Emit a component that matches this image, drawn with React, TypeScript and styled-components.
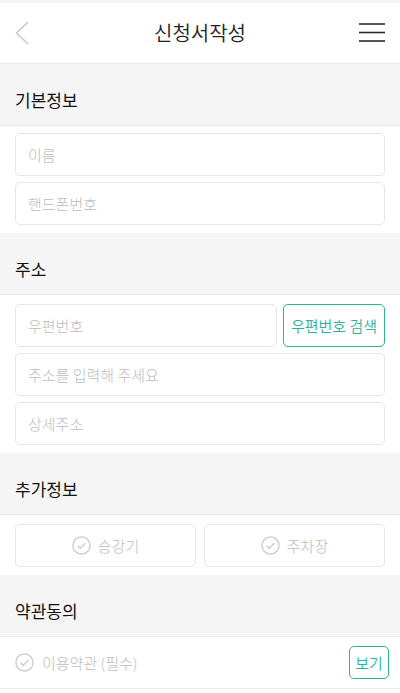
import styled, { createGlobalStyle } from 'styled-components';

const GlobalStyle = createGlobalStyle`
  * {
    box-sizing: border-box;
  }
  body {
    margin: 0;
    background: #ffffff;
    font-family: "Noto Sans CJK KR", "Noto Sans", sans-serif;
    color: #222222;
  }
`;

const TEAL = '#2ab39b';

const Page = styled.div`
  width: 400px;
  display: flex;
  flex-direction: column;
  background: #ffffff;
`;

const Header = styled.header`
  height: 64px;
  display: flex;
  align-items: center;
  justify-content: space-between;
  padding: 0 15px;
  border-top: 3px solid #f4f4f4;
  border-bottom: 1px solid #ebebeb;
`;

const IconButton = styled.button`
  width: 26px;
  height: 26px;
  padding: 0;
  border: none;
  background: none;
  display: flex;
  align-items: center;
  justify-content: flex-start;
`;

const MenuButton = styled(IconButton)`
  justify-content: flex-end;
`;

const Title = styled.h1`
  margin: 0;
  font-size: 20px;
  font-weight: 350;
  color: #222222;
  line-height: 26px;
`;

const SectionTitle = styled.h2`
  margin: 0;
  height: 62px;
  display: flex;
  align-items: flex-end;
  padding: 0 15px 13px;
  background: #f5f5f5;
  border-bottom: 1px solid #ebebeb;
  font-size: 17px;
  font-weight: 400;
  line-height: 24px;
  color: #111111;
`;

const Fields = styled.div<{ $pad?: number }>`
  display: flex;
  flex-direction: column;
  gap: 6px;
  padding: ${props => props.$pad ?? 7}px 15px 8px;
`;

const Input = styled.input`
  width: 100%;
  height: 43px;
  padding: 0 12px;
  border: 1px solid #e6e6e6;
  border-radius: 5px;
  font-family: inherit;
  font-size: 15px;
  font-weight: 300;
  color: #222222;
  outline: none;

  &::placeholder {
    color: #bcbcbc;
  }
`;

const ZipRow = styled.div`
  display: flex;
  gap: 6px;
`;

const OutlineButton = styled.button<{ $width: number; $height: number }>`
  flex: none;
  width: ${props => props.$width}px;
  height: ${props => props.$height}px;
  padding: 0;
  border: 1px solid ${TEAL};
  border-radius: 5px;
  background: #ffffff;
  color: ${TEAL};
  font-family: inherit;
  font-size: 15px;
  font-weight: 350;
  white-space: nowrap;
`;

const OptionRow = styled.div`
  display: grid;
  grid-template-columns: 1fr 1fr;
  gap: 8px;
  padding: 9px 15px 8px;
`;

const OptionButton = styled.button`
  height: 43px;
  display: flex;
  align-items: center;
  justify-content: center;
  gap: 7px;
  border: 1px solid #e6e6e6;
  border-radius: 5px;
  background: #ffffff;
  color: #bcbcbc;
  font-family: inherit;
  font-size: 15px;
  font-weight: 300;
`;

const AgreeRow = styled.div`
  height: 52px;
  display: flex;
  align-items: center;
  justify-content: space-between;
  padding: 0 11px 0 15px;
  border-bottom: 1px solid #ebebeb;
`;

const AgreeLabel = styled.label`
  display: flex;
  align-items: center;
  gap: 8px;
  color: #bcbcbc;
  font-size: 15px;
  font-weight: 300;
`;

const BackIcon = () => (
  <svg width="14" height="24" viewBox="0 0 14 24" fill="none">
    <polyline points="13,1 1.5,12 13,23" stroke="#c6c6c6" strokeWidth="1.4" />
  </svg>
);

const MenuIcon = () => (
  <svg width="26" height="20" viewBox="0 0 26 20" fill="none">
    <line x1="0" y1="1" x2="26" y2="1" stroke="#2a2a2a" strokeWidth="1.6" />
    <line x1="0" y1="9.5" x2="26" y2="9.5" stroke="#2a2a2a" strokeWidth="1.6" />
    <line x1="0" y1="18" x2="26" y2="18" stroke="#2a2a2a" strokeWidth="1.6" />
  </svg>
);

const CheckIcon = () => (
  <svg width="19" height="19" viewBox="0 0 19 19" fill="none">
    <circle cx="9.5" cy="9.5" r="8.6" stroke="#c8c8c8" strokeWidth="1.3" />
    <polyline points="5.6,9.8 8.3,12.4 13.4,6.9" stroke="#c8c8c8" strokeWidth="1.3" />
  </svg>
);

export default function App() {
  return (
    <Page>
      <GlobalStyle />
      <Header>
        <IconButton aria-label="뒤로">
          <BackIcon />
        </IconButton>
        <Title>신청서작성</Title>
        <MenuButton aria-label="메뉴">
          <MenuIcon />
        </MenuButton>
      </Header>

      <SectionTitle>기본정보</SectionTitle>
      <Fields>
        <Input placeholder="이름" />
        <Input placeholder="핸드폰번호" />
      </Fields>

      <SectionTitle>주소</SectionTitle>
      <Fields $pad={9}>
        <ZipRow>
          <Input placeholder="우편번호" />
          <OutlineButton $width={102} $height={43}>우편번호 검색</OutlineButton>
        </ZipRow>
        <Input placeholder="주소를 입력해 주세요" />
        <Input placeholder="상세주소" />
      </Fields>

      <SectionTitle>추가정보</SectionTitle>
      <OptionRow>
        <OptionButton>
          <CheckIcon />
          승강기
        </OptionButton>
        <OptionButton>
          <CheckIcon />
          주차장
        </OptionButton>
      </OptionRow>

      <SectionTitle>약관동의</SectionTitle>
      <AgreeRow>
        <AgreeLabel>
          <CheckIcon />
          이용약관 (필수)
        </AgreeLabel>
        <OutlineButton $width={40} $height={33}>보기</OutlineButton>
      </AgreeRow>
    </Page>
  );
}
